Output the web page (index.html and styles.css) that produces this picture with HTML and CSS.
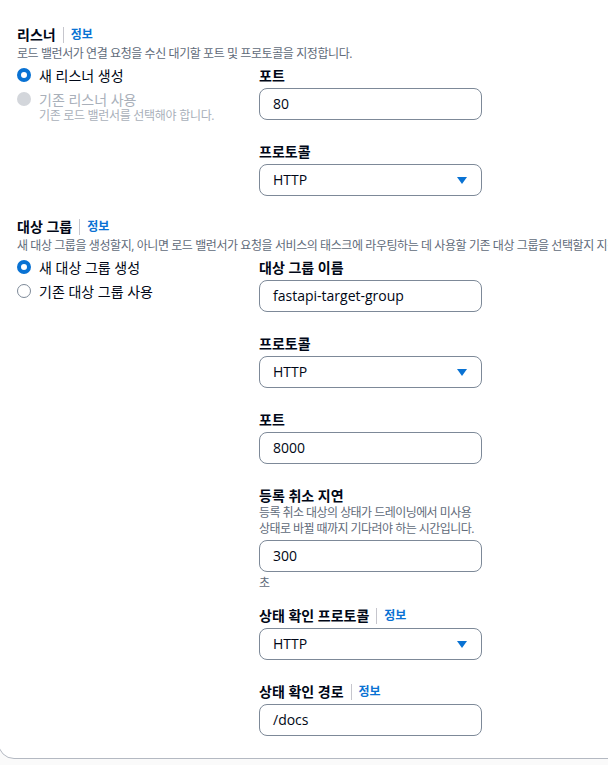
FILE: index.html
```html
<!DOCTYPE html>
<html lang="ko">
<head>
<meta charset="utf-8">
<link rel="stylesheet" href="styles.css">
</head>
<body>
<div class="card">
  <div class="cut">
    <div class="cut-line">로드 밸런서는 들어오는 트래픽을 태스크에 분산합니다. 기존 로드 밸런서를 사용하거나 새 로드 밸런서를 생성할 수 있습니다. <span class="cut-link">요금</span><span class="cut-icon"></span> 을 참조하세요.</div>
  </div>

  <section class="section listener">
    <div class="head">
      <h3 class="title">리스너<span class="sep"></span><a class="info">정보</a></h3>
      <p class="desc">로드 밸런서가 연결 요청을 수신 대기할 포트 및 프로토콜을 지정합니다.</p>
    </div>
    <div class="grid">
      <div class="radios">
        <div class="radio">
          <span class="dot checked"></span>
          <div><div class="rlabel">새 리스너 생성</div></div>
        </div>
        <div class="radio disabled">
          <span class="dot dis"></span>
          <div>
            <div class="rlabel">기존 리스너 사용</div>
            <div class="rdesc">기존 로드 밸런서를 선택해야 합니다.</div>
          </div>
        </div>
      </div>
      <div class="fields">
        <div class="field">
          <div class="label">포트</div>
          <div class="input">80</div>
        </div>
        <div class="field">
          <div class="label">프로토콜</div>
          <div class="input select">HTTP<span class="caret"></span></div>
        </div>
      </div>
    </div>
  </section>

  <section class="section tg">
    <div class="head">
      <h3 class="title">대상 그룹<span class="sep"></span><a class="info">정보</a></h3>
      <p class="desc nowrap">새 대상 그룹을 생성할지, 아니면 로드 밸런서가 요청을 서비스의 태스크에 라우팅하는 데 사용할 기존 대상 그룹을 선택할지 지정합니다.</p>
    </div>
    <div class="grid">
      <div class="radios">
        <div class="radio">
          <span class="dot checked"></span>
          <div><div class="rlabel">새 대상 그룹 생성</div></div>
        </div>
        <div class="radio">
          <span class="dot empty"></span>
          <div><div class="rlabel">기존 대상 그룹 사용</div></div>
        </div>
      </div>
      <div class="fields">
        <div class="field">
          <div class="label">대상 그룹 이름</div>
          <div class="input">fastapi-target-group</div>
        </div>
        <div class="field">
          <div class="label">프로토콜</div>
          <div class="input select">HTTP<span class="caret"></span></div>
        </div>
        <div class="field">
          <div class="label">포트</div>
          <div class="input">8000</div>
        </div>
        <div class="field">
          <div class="label">등록 취소 지연</div>
          <div class="fdesc">등록 취소 대상의 상태가 드레이닝에서 미사용 상태로 바뀔 때까지 기다려야 하는 시간입니다.</div>
          <div class="input after-desc">300</div>
          <div class="hint">초</div>
        </div>
        <div class="field">
          <div class="label">상태 확인 프로토콜<span class="sep"></span><a class="info">정보</a></div>
          <div class="input select">HTTP<span class="caret"></span></div>
        </div>
        <div class="field">
          <div class="label">상태 확인 경로<span class="sep"></span><a class="info">정보</a></div>
          <div class="input">/docs</div>
        </div>
      </div>
    </div>
  </section>
</div>
</body>
</html>
```

FILE: styles.css
```css
html, body {
  margin: 0;
  padding: 0;
  background: #fafafa;
  overflow: hidden;
}
body {
  font-family: "Open Sans", "Noto Sans CJK KR", sans-serif;
  color: #000716;
  font-size: 14px;
  width: 608px;
  height: 765px;
}
.card {
  width: 760px;
  margin: -20px 0 0 -2px;
  background: #fff;
  border: 1px solid #b4b9c2;
  border-radius: 16px;
  padding: 18px 0 22px 18px;
}
.cut {
  height: 3px;
  overflow: hidden;
}
.cut-line {
  margin-top: -13px;
  font-size: 12px;
  line-height: 16px;
  color: #5f6b7a;
  white-space: nowrap;
  letter-spacing: -0.4px;
}
.cut-link { color: #0972d3; }
.cut-icon {
  display: inline-block;
  width: 9px;
  height: 10px;
  background: #0972d3;
  margin-left: 3px;
  vertical-align: -2px;
}
.listener { margin-top: 24px; }
.tg { margin-top: 22px; }
.title {
  margin: 0;
  font-size: 14px;
  line-height: 18px;
  font-weight: 700;
  display: flex;
  align-items: center;
}
.sep {
  display: inline-block;
  width: 1px;
  height: 16px;
  background: #c6c6cd;
  margin: 0 7px;
}
.info {
  color: #0972d3;
  font-size: 12px;
  font-weight: 700;
}
.desc {
  margin: 2px 0 0;
  font-size: 12px;
  line-height: 16px;
  color: #5f6b7a;
  letter-spacing: -0.42px;
}
.nowrap { white-space: nowrap; }
.grid {
  display: grid;
  grid-template-columns: 226px 223px;
  column-gap: 16px;
  margin-top: 5px;
}
.radios {
  display: flex;
  flex-direction: column;
  gap: 6px;
}
.radio {
  display: flex;
  gap: 8px;
  align-items: flex-start;
}
.dot {
  flex: none;
  box-sizing: border-box;
  width: 14px;
  height: 14px;
  border-radius: 50%;
  margin-top: 1px;
}
.dot.checked {
  border: 4.5px solid #0972d3;
  background: #fff;
}
.dot.dis {
  background: #d3d6db;
}
.dot.empty {
  border: 1.5px solid #7d8998;
  background: #fff;
}
.rlabel {
  font-size: 14px;
  line-height: 18px;
}
.disabled .rlabel { color: #a9b0ba; }
.rdesc {
  font-size: 12px;
  line-height: 12px;
  margin-top: 1px;
  color: #a9b0ba;
  letter-spacing: -0.3px;
}
.fields {
  display: flex;
  flex-direction: column;
  gap: 23px;
}
.label {
  font-size: 14px;
  line-height: 18px;
  font-weight: 700;
  display: flex;
  align-items: center;
}
.fdesc {
  font-size: 12px;
  line-height: 16px;
  color: #5f6b7a;
  margin-top: 0;
  letter-spacing: -0.55px;
}
.input {
  box-sizing: border-box;
  height: 32px;
  margin-top: 3px;
  border: 1px solid #7d8998;
  border-radius: 8px;
  padding: 0 14px 0 13px;
  font-size: 14px;
  line-height: 30px;
  display: flex;
  align-items: center;
  justify-content: space-between;
}
.input.after-desc { margin-top: 3px; }
.caret {
  width: 0;
  height: 0;
  border-left: 5.5px solid transparent;
  border-right: 5.5px solid transparent;
  border-top: 7px solid #0972d3;
}
.hint {
  font-size: 12px;
  line-height: 16px;
  color: #5f6b7a;
  margin-top: 3px;
  margin-bottom: -7px;
}
```
